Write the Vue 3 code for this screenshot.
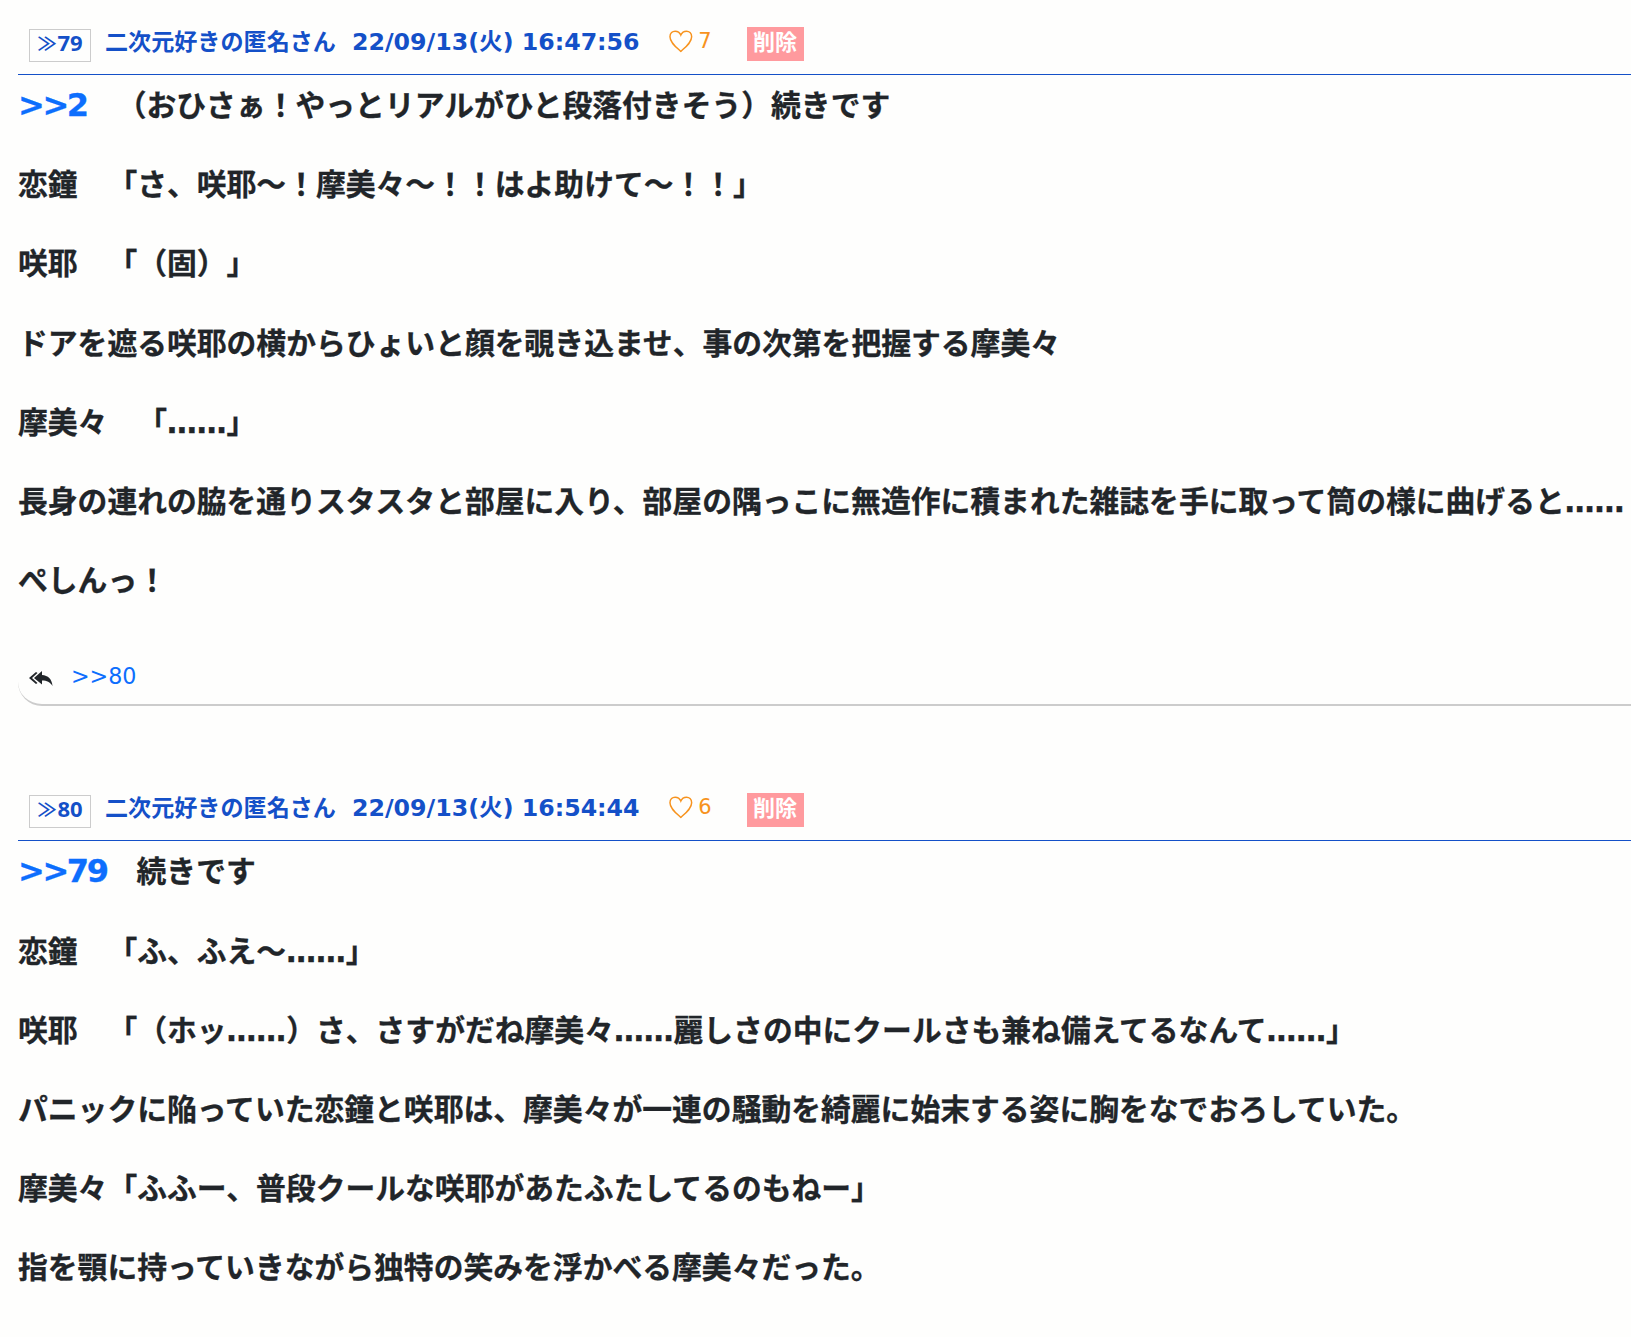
<script setup>
const posts = [
  { no: 79, date: '22/09/13(火) 16:47:56', likes: 7, anchor: '>>2', first: '（おひさぁ！やっとリアルがひと段落付きそう）続きです',
    lines: ['恋鐘　「さ、咲耶～！摩美々～！！はよ助けて～！！」','咲耶　「（固）」','ドアを遮る咲耶の横からひょいと顔を覗き込ませ、事の次第を把握する摩美々','摩美々　「……」','長身の連れの脇を通りスタスタと部屋に入り、部屋の隅っこに無造作に積まれた雑誌を手に取って筒の様に曲げると……','ぺしんっ！'], reply: '>>80' },
  { no: 80, date: '22/09/13(火) 16:54:44', likes: 6, anchor: '>>79', first: '続きです',
    lines: ['恋鐘　「ふ、ふえ～……」','咲耶　「（ホッ……）さ、さすがだね摩美々……麗しさの中にクールさも兼ね備えてるなんて……」','パニックに陥っていた恋鐘と咲耶は、摩美々が一連の騒動を綺麗に始末する姿に胸をなでおろしていた。','摩美々「ふふー、普段クールな咲耶があたふたしてるのもねー」','指を顎に持っていきながら独特の笑みを浮かべる摩美々だった。'] },
]
</script>

<template>
  <div class="page">
    <article v-for="p in posts" :key="p.no" class="post">
      <header class="head">
        <span class="no"><span class="mark">≫</span>{{ p.no }}</span>
        <span class="name">二次元好きの匿名さん</span>
        <span class="date">{{ p.date }}</span>
        <span class="like">
          <svg width="26" height="26" viewBox="0 0 26 26" fill="none" stroke="#f7931e" stroke-width="1.5"><path d="M13 23.500C8 19 2 14.500 2 8.600 2 5 4.600 3 7.200 3 9.700 3 12 4.600 13 7 14 4.600 16.300 3 18.800 3 21.400 3 24 5 24 8.600 24 14.500 18 19 13 23.500Z"/></svg>
          <span>{{ p.likes }}</span>
        </span>
        <span class="del">削除</span>
      </header>
      <div class="body">
        <p class="line"><a class="anchor">{{ p.anchor }}</a><span>{{ p.first }}</span></p>
        <p v-for="(l, i) in p.lines" :key="i" class="line">{{ l }}</p>
      </div>
      <footer v-if="p.reply" class="replies">
        <svg class="rep" width="26" height="16" viewBox="0 0 26 16" fill="#212529"><path d="M8 1 1 7l7 6 1.500-1L4 7l5.500-5z"/><path d="M14 0 6 7l8 6.500v-4c5 0 8 1.500 10.500 5.500C24 8 20 4.500 14 4z"/></svg>
        <a class="reply">{{ p.reply }}</a>
      </footer>
    </article>
  </div>
</template>

<style>
html, body { background: #fefefd; overflow-x: hidden; }
</style>
<style scoped>
.page { width: 1631px; height: 1337px; overflow: hidden; font-family: "DejaVu Sans", "Noto Sans CJK JP", sans-serif; color: #212529; padding: 27px 0 0 18px; box-sizing: border-box; text-spacing-trim: space-all; }
.post { margin-bottom: 87px; }
.head { display: flex; align-items: flex-start; height: 48px; box-sizing: border-box; border-bottom: 1px solid #1450c8; color: #1450c8; font-weight: 700; font-size: 23.100px; line-height: 30px; padding-left: 11px; }
.no { border: 1px solid #ccc; width: 62px; height: 33px; margin-top: 2px; box-sizing: border-box; text-align: center; font-family: "Noto Sans", sans-serif; font-size: 22px; line-height: 24px; margin-right: 14px; }
.mark { font-family: "Noto Sans CJK JP", sans-serif; font-weight: 700; font-size: 19px; margin-right: 1px; }
.name { margin-right: 16px; }
.date { margin-right: 28px; white-space: nowrap; font-size: 23.700px; }
.like { color: #f7931e; font-weight: 400; font-size: 21px; display: flex; align-items: center; gap: 5px; margin-right: 35px; width: 44px; margin-top: -1px; }
.del { background: #ff9a9e; color: #fff; width: 57px; height: 34px; box-sizing: border-box; padding-bottom: 3px; display: flex; align-items: center; justify-content: center; font-size: 22px; }
.body { font-size: 29.800px; line-height: 39.600px; font-weight: 700; padding-top: 11px; -webkit-text-stroke: 0.3px currentColor; }
.line { margin: 0 0 39.600px; white-space: nowrap; }
.anchor { color: #0d6efd; font-size: 32px; letter-spacing: -2.400px; margin-right: 30px; }
.replies { display: flex; align-items: center; height: 66px; padding-top: 7px; border-bottom: 2px solid #ccc; border-radius: 0 0 0 24px; padding-left: 10px; margin-top: 2px; box-sizing: border-box; }
.rep { margin-right: 17px; margin-top: 6px; }
.reply { color: #0d6efd; font-size: 22.200px; }
</style>
